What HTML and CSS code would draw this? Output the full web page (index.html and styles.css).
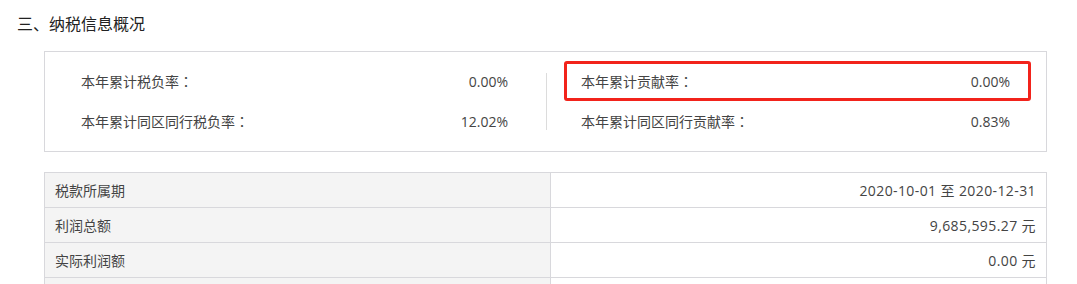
FILE: index.html
```html
<!DOCTYPE html>
<html lang="zh-CN">
<head>
<meta charset="utf-8">
<link rel="stylesheet" href="styles.css">
</head>
<body>
<div class="page">
  <h2 class="title">三、纳税信息概况</h2>
  <div class="content">
    <div class="summary">
      <div class="col col-left">
        <div class="row"><span class="label">本年累计税负率<span class="colon" lang="zh-TW">：</span></span><span class="value">0.00%</span></div>
        <div class="row"><span class="label">本年累计同区同行税负率<span class="colon" lang="zh-TW">：</span></span><span class="value">12.02%</span></div>
      </div>
      <div class="divider"></div>
      <div class="col col-right">
        <div class="row highlight"><span class="label">本年累计贡献率<span class="colon" lang="zh-TW">：</span></span><span class="value">0.00%</span></div>
        <div class="row"><span class="label">本年累计同区同行贡献率<span class="colon" lang="zh-TW">：</span></span><span class="value">0.83%</span></div>
      </div>
    </div>
    <table class="detail">
      <tr><td class="k">税款所属期</td><td class="v">2020-10-01 至 2020-12-31</td></tr>
      <tr><td class="k">利润总额</td><td class="v">9,685,595.27 元</td></tr>
      <tr><td class="k">实际利润额</td><td class="v">0.00 元</td></tr>
      <tr><td class="k">&nbsp;</td><td class="v">&nbsp;</td></tr>
    </table>
  </div>
</div>
</body>
</html>
```
FILE: styles.css
```css
html, body {
  margin: 0;
  padding: 0;
  background: #fff;
}
body {
  font-family: "Open Sans", "Noto Sans CJK SC", sans-serif;
  color: #333;
  font-size: 14px;
}
.page {
  padding: 14px 0 0 17px;
}
.title {
  margin: 0;
  font-size: 16px;
  font-weight: normal;
  line-height: 20px;
  color: #222;
}
.content {
  margin: 17px 0 0 27px;
  width: 1003px;
}
.summary {
  display: flex;
  border: 1px solid #d8d8dc;
  padding: 9px 0 10px;
}
.col {
  display: flex;
  flex-direction: column;
}
.col-left {
  width: 501px;
  padding: 0 38px 0 36px;
  box-sizing: border-box;
}
.col-left .row {
  height: 40px;
}
.divider {
  width: 1px;
  height: 57px;
  background: #dcdcdc;
  align-self: center;
}
.col-right {
  flex: 1;
  padding: 0 15px 0 17px;
}
.col-right .row {
  height: 40px;
  box-sizing: border-box;
  border: 3px solid transparent;
  border-radius: 3px;
  padding: 0 18px 0 14px;
}
.col-right .row.highlight {
  border-color: #f2231b;
}
.row {
  display: flex;
  align-items: center;
  justify-content: space-between;
  color: #444;
}
.colon {
  font-family: "Noto Sans CJK TC", sans-serif;
}
.detail {
  margin-top: 20px;
  width: 100%;
  border-collapse: collapse;
  table-layout: fixed;
}
.detail td {
  border: 1px solid #d8d8dc;
  height: 35px;
  padding: 0 10px;
  color: #444;
  box-sizing: border-box;
}
.detail td.k {
  width: 506px;
  background: #f4f4f4;
}
.detail td.v {
  text-align: right;
  letter-spacing: 0.4px;
}
```
